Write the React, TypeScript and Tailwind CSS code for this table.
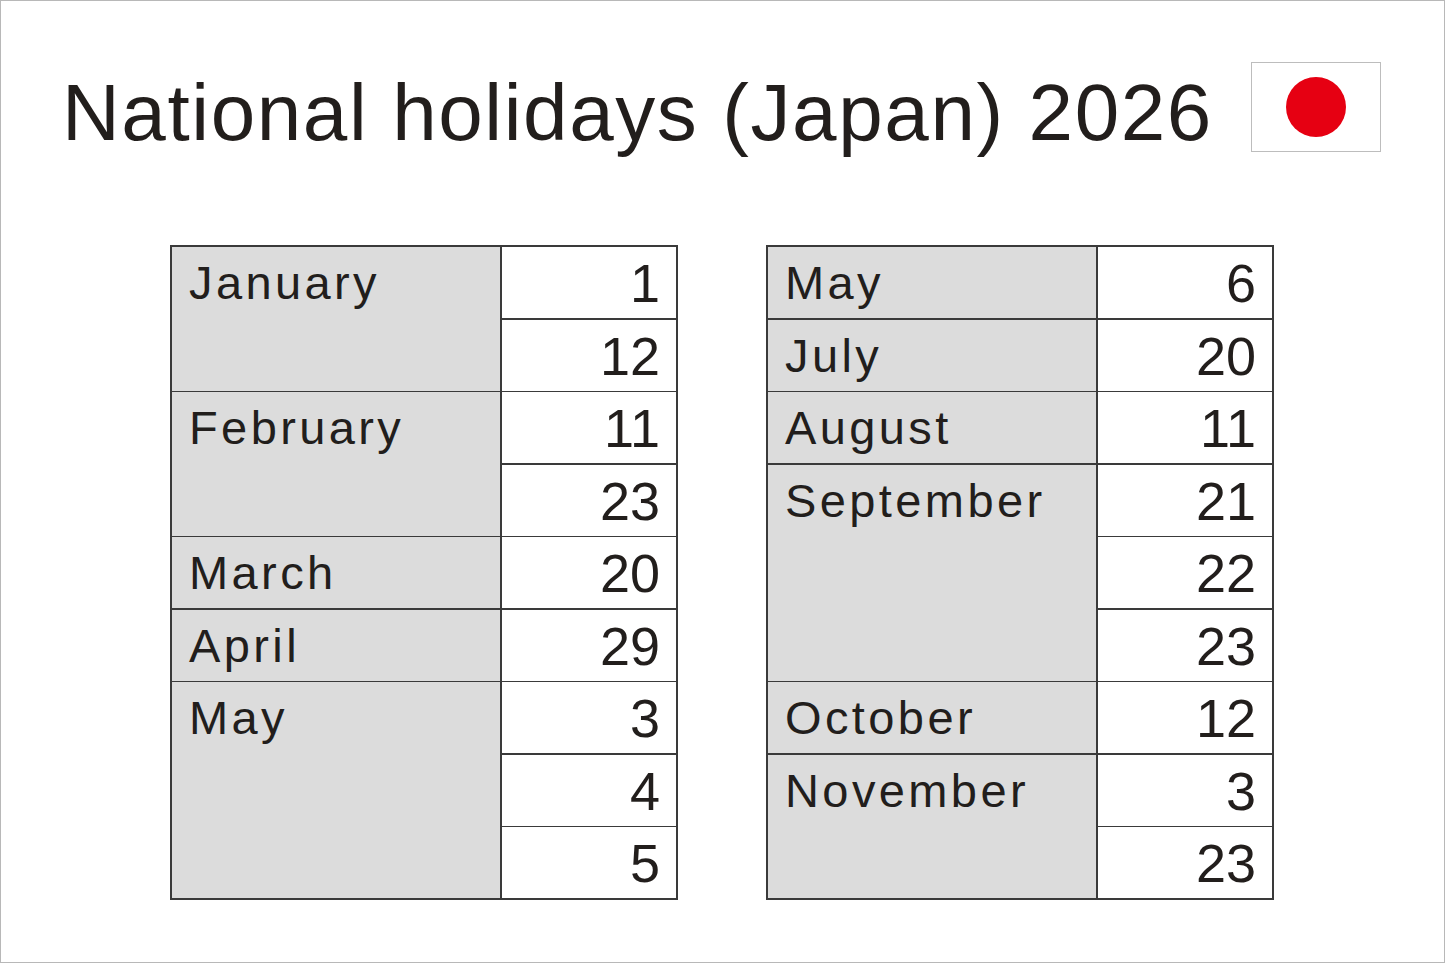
import React from "react";

type Group = { month: string; days: number[] };

const left: Group[] = [
  { month: "January", days: [1, 12] },
  { month: "February", days: [11, 23] },
  { month: "March", days: [20] },
  { month: "April", days: [29] },
  { month: "May", days: [3, 4, 5] },
];

const right: Group[] = [
  { month: "May", days: [6] },
  { month: "July", days: [20] },
  { month: "August", days: [11] },
  { month: "September", days: [21, 22, 23] },
  { month: "October", days: [12] },
  { month: "November", days: [3, 23] },
];

const spanClass: Record<number, string> = {
  1: "row-span-1",
  2: "row-span-2",
  3: "row-span-3",
};

function HolidayTable({ groups }: { groups: Group[] }) {
  const cells: React.ReactNode[] = [];
  groups.forEach((g, gi) => {
    g.days.forEach((d, di) => {
      if (di === 0) {
        cells.push(
          <div
            key={`m-${gi}`}
            className={`${spanClass[g.days.length]} col-start-1 bg-[#dcdcdc] pl-[17px] pt-[12px] text-[47px] leading-none tracking-[3.4px]`}
          >
            {g.month}
          </div>
        );
      }
      cells.push(
        <div
          key={`d-${gi}-${di}`}
          className="col-start-2 flex items-center justify-end bg-white pr-[16px] pt-[1px] text-[54px] leading-none"
        >
          {d}
        </div>
      );
    });
  });
  return (
    <div className="grid h-[655px] w-[508px] grid-cols-[328px_1fr] grid-rows-[repeat(9,1fr)] gap-[1.5px] border-2 border-[#3a3a3a] bg-[#3a3a3a] [grid-auto-flow:row_dense]">
      {cells}
    </div>
  );
}

export default function App() {
  return (
    <div className="h-[963px] w-[1445px] border border-[#b8b8b8] bg-white font-['Liberation_Sans',Arial,sans-serif] text-[#221e1c]">
      <div className="flex items-start pl-[61px] pr-[63px] pt-[61px]">
        <h1 className="mt-[11px] text-[80px] font-normal leading-none tracking-[1.6px]">
          National holidays (Japan) 2026
        </h1>
        <div className="ml-auto flex h-[90px] w-[130px] items-center justify-center border border-[#bdbdbd] bg-white">
          <div className="h-[60px] w-[60px] rounded-full bg-[#e60012]" />
        </div>
      </div>
      <div className="mt-[92px] flex gap-[88px] pl-[169px]">
        <HolidayTable groups={left} />
        <HolidayTable groups={right} />
      </div>
    </div>
  );
}
